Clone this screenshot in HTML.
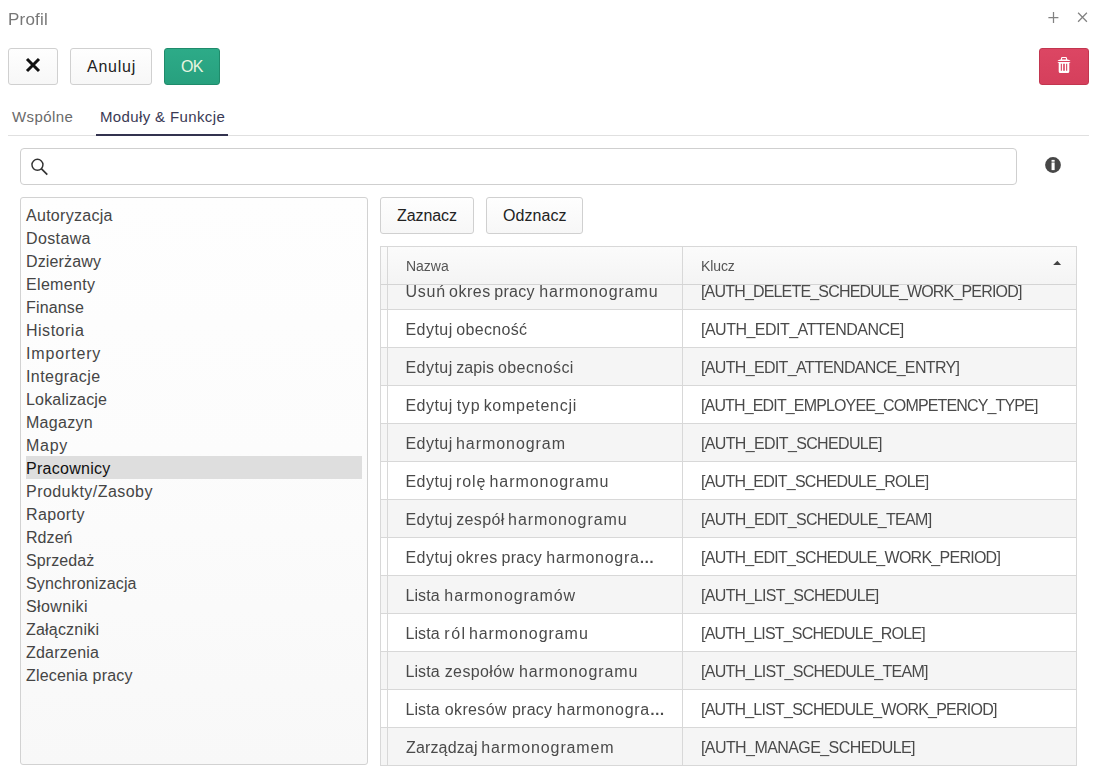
<!DOCTYPE html>
<html lang="pl">
<head>
<meta charset="utf-8">
<title>Profil</title>
<style>
*{box-sizing:border-box;margin:0;padding:0}
html,body{width:1096px;height:780px;overflow:hidden;background:#fff}
body{position:relative;font-family:"Liberation Sans","DejaVu Sans",sans-serif;font-size:16px;color:#444;line-height:1}
.abs{position:absolute}
.t{position:absolute;white-space:nowrap;line-height:1}
.title{left:8px;top:11px;font-size:17px;color:#777;will-change:transform}
.btn{position:absolute;top:48px;height:37px;border:1px solid #d0d0d0;border-radius:3px;background:linear-gradient(#fefefe,#f7f7f7);color:#222;font-size:16px;text-align:center;line-height:35px;white-space:nowrap}
.btn.tx,.b2{text-align:left}
.btn.ok{background:linear-gradient(#2dab88,#27a07e);border-color:#1f8b6b;color:#e8f5e0}
.btn.del{background:linear-gradient(#dc4663,#d53f5c);border-color:#c2364f}
.tab{position:absolute;top:109px;font-size:15px;color:#6a6a6a;white-space:nowrap}
.tab.act{color:#3a3a55}
.tabline{left:8px;top:135px;width:1081px;height:1px;background:#e0e0e0}
.tabact{left:96px;top:134px;width:132px;height:2px;background:#33334f}
.search{left:20px;top:148px;width:997px;height:37px;border:1px solid #cfcfcf;border-radius:4px;background:#fff}
.list{left:20px;top:197px;width:348px;height:568px;border:1px solid #d2d2d2;border-radius:3px;background:linear-gradient(#fefefe,#fcfcfc 45%,#f8f8f8)}
.li{position:absolute;left:5px;height:23px;line-height:23px;font-size:16px;color:#454545;white-space:nowrap}
.li.on{color:#111}
.sel{position:absolute;left:5px;top:258px;width:336px;height:23px;background:#dedede}
.b2{position:absolute;top:197px;height:37px;border:1px solid #d0d0d0;border-radius:3px;background:linear-gradient(#fefefe,#f7f7f7);color:#222;font-size:16px;text-align:left;line-height:35px;white-space:nowrap}
.grid{left:380px;top:246px;width:697px;height:520px;border:1px solid #d8d8d8;overflow:hidden;background:#fff}
.hdr{position:absolute;left:0;top:0;width:695px;height:38px;background:linear-gradient(#fbfbfb,#f4f4f4);border-bottom:1px solid #d4d4d4;z-index:2}
.row{position:absolute;left:0;width:695px;height:38px;border-bottom:1px solid #d8d8d8;background:#fff}
.row.alt{background:#f5f5f5}
.c0{position:absolute;left:0;top:0;width:7px;height:100%;border-right:1px solid #d8d8d8}
.c1{position:absolute;left:7px;top:0;width:295px;height:100%;border-right:1px solid #d8d8d8}
.c1 span.tx,.c2 span.tx,.hdr span{will-change:transform;position:absolute;left:18px;top:1px;line-height:37px;white-space:nowrap;color:#4a4a4a;font-size:16px}
.c2{position:absolute;left:302px;top:0;width:393px;height:100%}
.el{font-size:15px;font-weight:bold}
.hdr span{font-size:14px !important;color:#555 !important;line-height:36px !important}
</style>
</head>
<body>
<div class="t title"><span id="t_title" style="letter-spacing:0.200px">Profil</span></div>
<svg class="abs" style="left:1046px;top:10px" width="46" height="16" viewBox="0 0 46 16"><path d="M7.500 2v11M2.400 7.500h10" stroke="#828282" stroke-width="1.250" fill="none"/><path d="M32.100 2.800l8.800 9M40.900 2.800l-8.800 9" stroke="#828282" stroke-width="1.250" fill="none"/></svg>

<div class="btn" style="left:8px;width:50px"><svg class="abs" style="left:16px;top:8px" width="16" height="16" viewBox="0 0 16 16"><path d="M2 2l12 12M14 2L2 14" stroke="#111" stroke-width="3" fill="none"/></svg></div>
<div class="btn tx" style="left:70px;width:82px;padding-left:16px"><span id="t_anuluj" style="letter-spacing:0.760px">Anuluj</span></div>
<div class="btn ok tx" style="left:164px;width:56px;padding-left:16px"><span id="t_ok" style="letter-spacing:-0.750px">OK</span></div>
<div class="btn del" style="left:1039px;width:50px"><svg class="abs" style="left:17px;top:7px" width="14" height="18" viewBox="0 0 14 18"><rect x="4.500" y="1.550" width="5" height="3" rx="0.900" fill="none" stroke="#fff" stroke-width="1.100"/><path fill="#fff" d="M3.200 3.400H10.800L13.200 4.400V5H0.800V4.400Z"/><path fill="#fff" fill-rule="evenodd" d="M0.800 6H13.200V6.700H12.300V15.400a1.600 1.600 0 0 1-1.600 1.600H3.300a1.600 1.600 0 0 1-1.600-1.600V6.700H0.800ZM3.800 7.800V14.800H4.900V7.800ZM6.200 7.800V14.800H7.800V7.800ZM9.100 7.800V14.800H10.200V7.800Z"/></svg></div>

<div class="tab" style="left:12px"><span id="t_tab1" style="letter-spacing:0.408px">Wspólne</span></div>
<div class="tab act" style="left:100px"><span id="t_tab2" style="letter-spacing:0.367px">Moduły &amp; Funkcje</span></div>
<div class="abs tabline"></div>
<div class="abs tabact"></div>

<div class="abs search"><svg class="abs" style="left:9px;top:8px" width="20" height="20" viewBox="0 0 20 20"><circle cx="7.450" cy="7.800" r="5.500" stroke="#333" stroke-width="1.450" fill="none"/><path d="M11.300 11.700l6 5.900" stroke="#333" stroke-width="1.700" fill="none"/></svg></div>
<svg class="abs" style="left:1045px;top:157px" width="16" height="16" viewBox="0 0 16 16"><circle cx="8" cy="8" r="7.900" fill="#474747"/><rect x="6.550" y="2.900" width="3.100" height="1.800" fill="#fff"/><rect x="6.550" y="5.500" width="3.100" height="7.600" fill="#fff"/></svg>

<div class="abs list" id="list">
<div class="sel"></div>
<div class="li" style="top:6px"><span id="li0" style="letter-spacing:0.280px">Autoryzacja</span></div>
<div class="li" style="top:29px"><span id="li1" style="letter-spacing:0.375px">Dostawa</span></div>
<div class="li" style="top:52px"><span id="li2" style="letter-spacing:0.137px">Dzierżawy</span></div>
<div class="li" style="top:75px"><span id="li3" style="letter-spacing:0.329px">Elementy</span></div>
<div class="li" style="top:98px"><span id="li4" style="letter-spacing:0.150px">Finanse</span></div>
<div class="li" style="top:121px"><span id="li5" style="letter-spacing:0.507px">Historia</span></div>
<div class="li" style="top:144px"><span id="li6" style="letter-spacing:0.850px">Importery</span></div>
<div class="li" style="top:167px"><span id="li7" style="letter-spacing:0.422px">Integracje</span></div>
<div class="li" style="top:190px"><span id="li8" style="letter-spacing:0.185px">Lokalizacje</span></div>
<div class="li" style="top:213px"><span id="li9" style="letter-spacing:0.283px">Magazyn</span></div>
<div class="li" style="top:236px"><span id="li10" style="letter-spacing:0.717px">Mapy</span></div>
<div class="li on" style="top:259px"><span id="li11" style="letter-spacing:0.283px">Pracownicy</span></div>
<div class="li" style="top:282px"><span id="li12" style="letter-spacing:0.454px">Produkty/Zasoby</span></div>
<div class="li" style="top:305px"><span id="li13" style="letter-spacing:0.392px">Raporty</span></div>
<div class="li" style="top:328px"><span id="li14" style="letter-spacing:0.062px">Rdzeń</span></div>
<div class="li" style="top:351px"><span id="li15" style="letter-spacing:0.079px">Sprzedaż</span></div>
<div class="li" style="top:374px"><span id="li16" style="letter-spacing:0.154px">Synchronizacja</span></div>
<div class="li" style="top:397px"><span id="li17" style="letter-spacing:0.393px">Słowniki</span></div>
<div class="li" style="top:420px"><span id="li18" style="letter-spacing:0.200px">Załączniki</span></div>
<div class="li" style="top:443px"><span id="li19" style="letter-spacing:0.225px">Zdarzenia</span></div>
<div class="li" style="top:466px"><span id="li20" style="letter-spacing:0.181px">Zlecenia pracy</span></div>
</div>

<div class="b2" style="left:380px;width:94px;padding-left:16px"><span id="t_zaz" style="letter-spacing:-0.092px">Zaznacz</span></div>
<div class="b2" style="left:486px;width:97px;padding-left:16px"><span id="t_odz" style="letter-spacing:0.075px">Odznacz</span></div>

<div class="abs grid" id="grid">
<div class="row alt" style="top:25px"><div class="c0"></div><div class="c1"><span class="tx"><span id="ra0w0" style="letter-spacing:0.800px;margin-left:-0.600px;">Usuń</span> <span id="ra0w1" style="letter-spacing:0.500px;margin-left:-1.400px;">okres</span> <span id="ra0w2" style="letter-spacing:0.250px;margin-left:-0.800px;">pracy</span> <span id="ra0w3" style="letter-spacing:0.909px;margin-left:-0.000px;">harmonogramu</span></span></div><div class="c2"><span class="tx" id="rb0" style="letter-spacing:-0.823px">[AUTH_DELETE_SCHEDULE_WORK_PERIOD]</span></div></div>
<div class="row" style="top:63px"><div class="c0"></div><div class="c1"><span class="tx"><span id="ra1w0" style="letter-spacing:0.480px;margin-left:-0.600px;">Edytuj</span> <span id="ra1w1" style="letter-spacing:0.343px;margin-left:-1.000px;">obecność</span></span></div><div class="c2"><span class="tx" id="rb1" style="letter-spacing:-0.514px">[AUTH_EDIT_ATTENDANCE]</span></div></div>
<div class="row alt" style="top:101px"><div class="c0"></div><div class="c1"><span class="tx"><span id="ra2w0" style="letter-spacing:0.480px;margin-left:-0.600px;">Edytuj</span> <span id="ra2w1" style="letter-spacing:0.100px;margin-left:-1.000px;">zapis</span> <span id="ra2w2" style="letter-spacing:0.425px;margin-left:-0.600px;">obecności</span></span></div><div class="c2"><span class="tx" id="rb2" style="letter-spacing:-0.661px">[AUTH_EDIT_ATTENDANCE_ENTRY]</span></div></div>
<div class="row" style="top:139px"><div class="c0"></div><div class="c1"><span class="tx"><span id="ra3w0" style="letter-spacing:0.480px;margin-left:-0.600px;">Edytuj</span> <span id="ra3w1" style="letter-spacing:0.800px;margin-left:-0.600px;">typ</span> <span id="ra3w2" style="letter-spacing:0.720px;margin-left:-1.200px;">kompetencji</span></span></div><div class="c2"><span class="tx" id="rb3" style="letter-spacing:-0.853px">[AUTH_EDIT_EMPLOYEE_COMPETENCY_TYPE]</span></div></div>
<div class="row alt" style="top:177px"><div class="c0"></div><div class="c1"><span class="tx"><span id="ra4w0" style="letter-spacing:0.480px;margin-left:-0.600px;">Edytuj</span> <span id="ra4w1" style="letter-spacing:0.940px;margin-left:-1.200px;">harmonogram</span></span></div><div class="c2"><span class="tx" id="rb4" style="letter-spacing:-0.645px">[AUTH_EDIT_SCHEDULE]</span></div></div>
<div class="row" style="top:215px"><div class="c0"></div><div class="c1"><span class="tx"><span id="ra5w0" style="letter-spacing:0.480px;margin-left:-0.600px;">Edytuj</span> <span id="ra5w1" style="letter-spacing:0.933px;margin-left:-1.200px;">rolę</span> <span id="ra5w2" style="letter-spacing:0.945px;margin-left:-1.400px;">harmonogramu</span></span></div><div class="c2"><span class="tx" id="rb5" style="letter-spacing:-0.754px">[AUTH_EDIT_SCHEDULE_ROLE]</span></div></div>
<div class="row alt" style="top:253px"><div class="c0"></div><div class="c1"><span class="tx"><span id="ra6w0" style="letter-spacing:0.480px;margin-left:-0.600px;">Edytuj</span> <span id="ra6w1" style="letter-spacing:0.360px;margin-left:-1.000px;">zespół</span> <span id="ra6w2" style="letter-spacing:0.909px;margin-left:-1.000px;">harmonogramu</span></span></div><div class="c2"><span class="tx" id="rb6" style="letter-spacing:-0.667px">[AUTH_EDIT_SCHEDULE_TEAM]</span></div></div>
<div class="row" style="top:291px"><div class="c0"></div><div class="c1"><span class="tx"><span id="ra7w0" style="letter-spacing:0.480px;margin-left:-0.600px;">Edytuj</span> <span id="ra7w1" style="letter-spacing:0.500px;margin-left:-1.000px;">okres</span> <span id="ra7w2" style="letter-spacing:0.250px;margin-left:-0.800px;">pracy</span> <span id="ra7w3" style="letter-spacing:0.693px;margin-left:-0.040px;">harmonogra</span><span class="el" id="ra7w4" style="margin-left:-0.160px;">…</span></span></div><div class="c2"><span class="tx" id="rb7" style="letter-spacing:-0.737px">[AUTH_EDIT_SCHEDULE_WORK_PERIOD]</span></div></div>
<div class="row alt" style="top:329px"><div class="c0"></div><div class="c1"><span class="tx"><span id="ra8w0" style="letter-spacing:0.100px;margin-left:-0.600px;">Lista</span> <span id="ra8w1" style="letter-spacing:0.883px;margin-left:0.200px;">harmonogramów</span></span></div><div class="c2"><span class="tx" id="rb8" style="letter-spacing:-0.676px">[AUTH_LIST_SCHEDULE]</span></div></div>
<div class="row" style="top:367px"><div class="c0"></div><div class="c1"><span class="tx"><span id="ra9w0" style="letter-spacing:0.100px;margin-left:-0.600px;">Lista</span> <span id="ra9w1" style="letter-spacing:1.500px;margin-left:0.200px;">ról</span> <span id="ra9w2" style="letter-spacing:0.945px;margin-left:-2.200px;">harmonogramu</span></span></div><div class="c2"><span class="tx" id="rb9" style="letter-spacing:-0.794px">[AUTH_LIST_SCHEDULE_ROLE]</span></div></div>
<div class="row alt" style="top:405px"><div class="c0"></div><div class="c1"><span class="tx"><span id="ra10w0" style="letter-spacing:0.100px;margin-left:-0.600px;">Lista</span> <span id="ra10w1" style="letter-spacing:0.371px;margin-left:0.600px;">zespołów</span> <span id="ra10w2" style="letter-spacing:0.909px;margin-left:-0.000px;">harmonogramu</span></span></div><div class="c2"><span class="tx" id="rb10" style="letter-spacing:-0.708px">[AUTH_LIST_SCHEDULE_TEAM]</span></div></div>
<div class="row" style="top:443px"><div class="c0"></div><div class="c1"><span class="tx"><span id="ra11w0" style="letter-spacing:0.100px;margin-left:-0.600px;">Lista</span> <span id="ra11w1" style="letter-spacing:0.367px;margin-left:0.600px;">okresów</span> <span id="ra11w2" style="letter-spacing:0.250px;margin-left:0.600px;">pracy</span> <span id="ra11w3" style="letter-spacing:0.671px;margin-left:0.040px;">harmonogra</span><span class="el" id="ra11w4" style="margin-left:-0.080px;">…</span></span></div><div class="c2"><span class="tx" id="rb11" style="letter-spacing:-0.763px">[AUTH_LIST_SCHEDULE_WORK_PERIOD]</span></div></div>
<div class="row alt" style="top:481px"><div class="c0"></div><div class="c1"><span class="tx"><span id="ra12w0" style="letter-spacing:0.150px;margin-left:-0.000px;">Zarządzaj</span> <span id="ra12w1" style="letter-spacing:0.883px;margin-left:-0.800px;">harmonogramem</span></span></div><div class="c2"><span class="tx" id="rb12" style="letter-spacing:-0.581px">[AUTH_MANAGE_SCHEDULE]</span></div></div>
<div class="hdr"><div class="c0"></div><div class="c1"><span id="h_nazwa" style="letter-spacing:-0.013px">Nazwa</span></div><div class="c2"><span id="h_klucz" style="letter-spacing:-0.112px">Klucz</span></div>
<svg class="abs" style="left:672px;top:13px" width="9" height="6" viewBox="0 0 9 6"><path d="M0.100 5.100L4.350 0.800L8.100 5.100z" fill="#444"/></svg></div>
</div>
</body>
</html>
